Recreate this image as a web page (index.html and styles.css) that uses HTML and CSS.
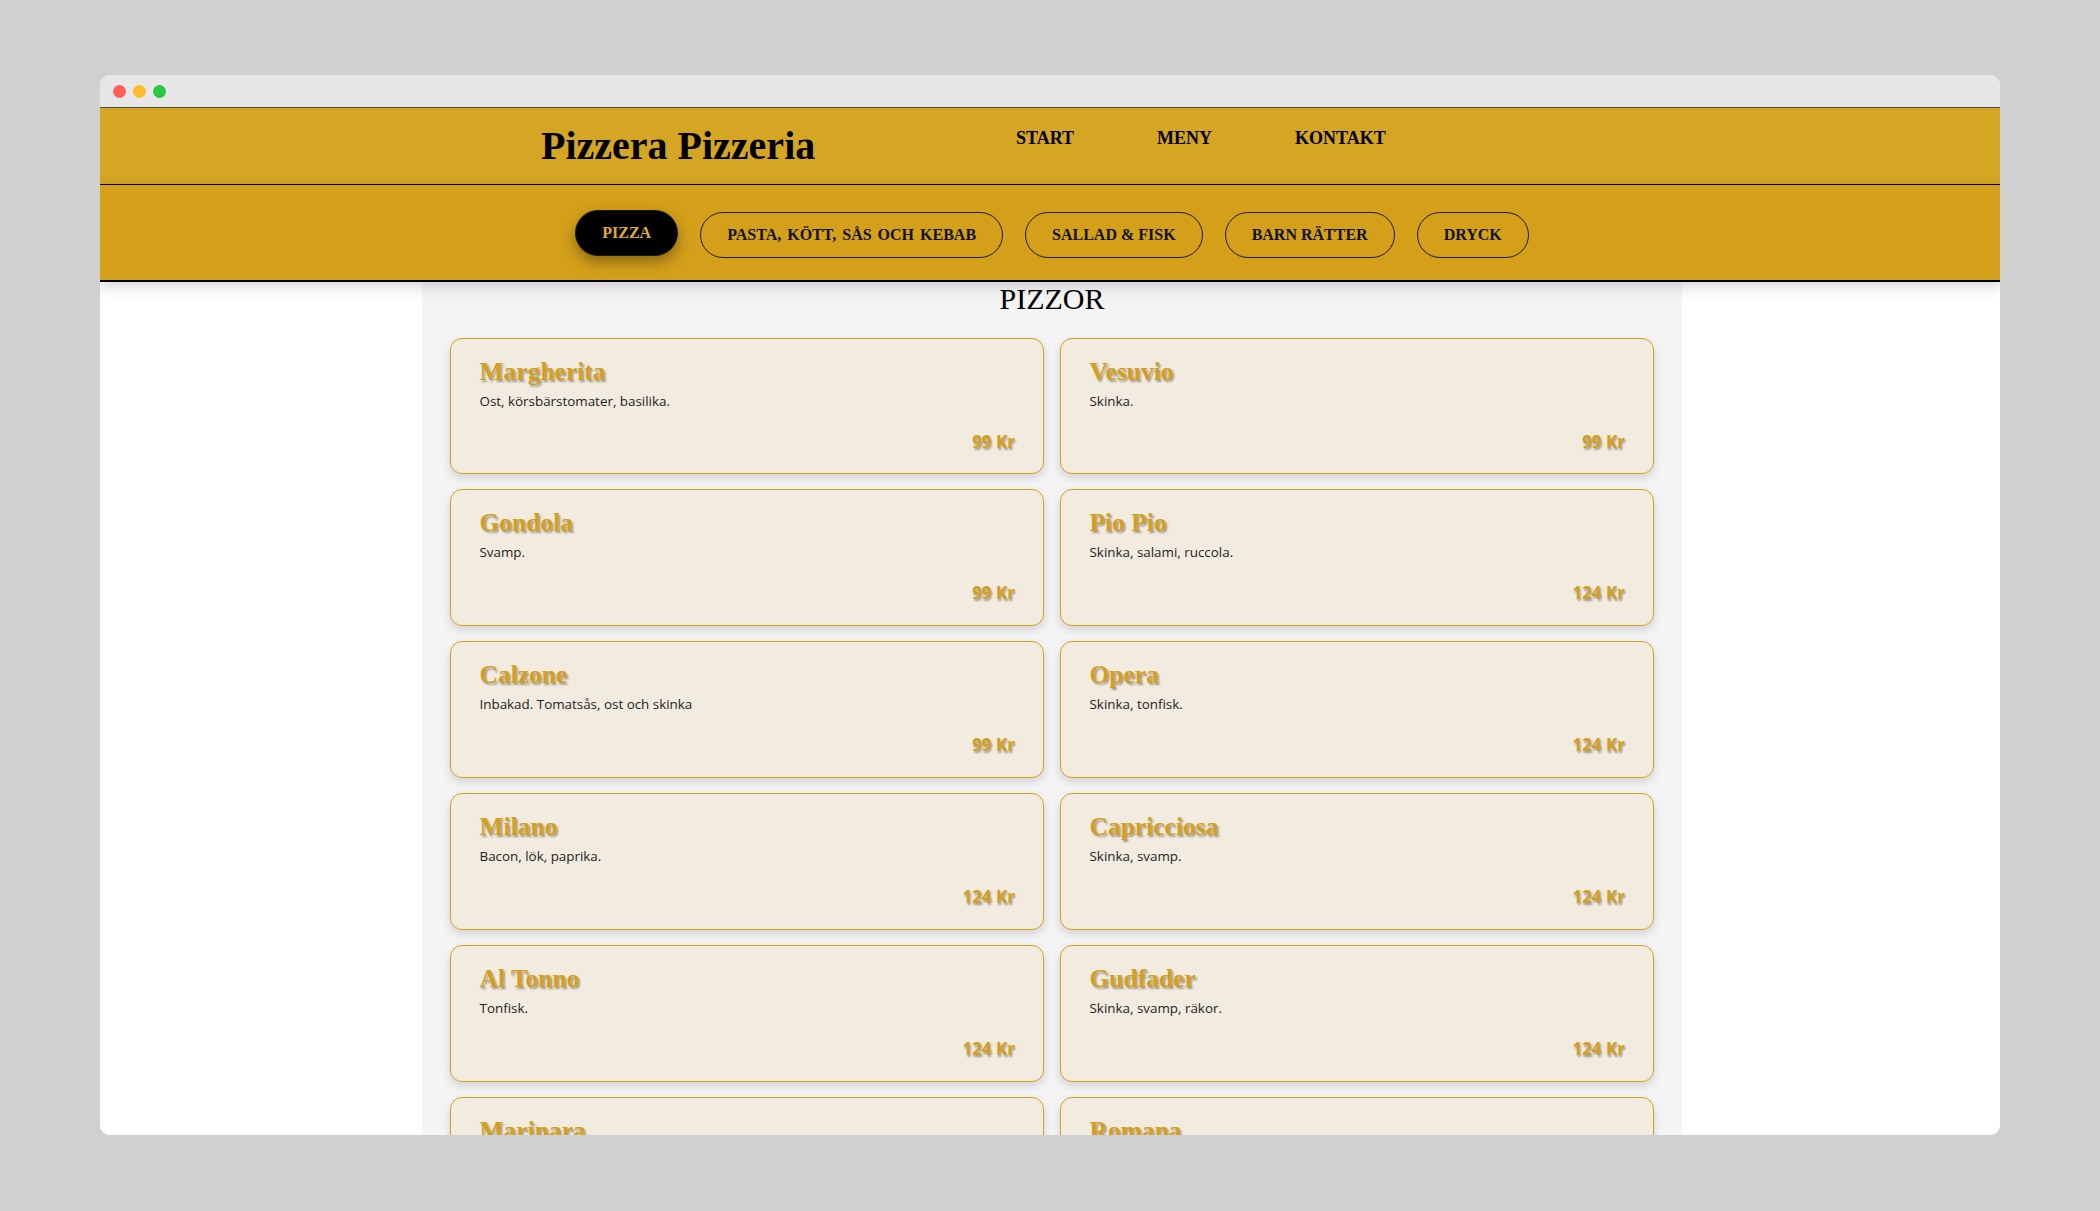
FILE: index.html
```html
<!DOCTYPE html>
<html lang="sv">
<head>
<meta charset="utf-8">
<title>Pizzera Pizzeria</title>
<link rel="stylesheet" href="styles.css">
</head>
<body>
<div class="window">
  <div class="titlebar">
    <span class="dot dot-red"></span>
    <span class="dot dot-yellow"></span>
    <span class="dot dot-green"></span>
  </div>
  <header class="site-header">
    <h1 class="brand">Pizzera Pizzeria</h1>
    <nav class="main-nav">
      <a href="#">START</a>
      <a href="#">MENY</a>
      <a href="#">KONTAKT</a>
    </nav>
  </header>
  <nav class="category-nav">
    <a class="pill pill-active" href="#">PIZZA</a>
    <a class="pill pill-long" href="#">PASTA, KÖTT, SÅS OCH KEBAB</a>
    <a class="pill" href="#">SALLAD &amp; FISK</a>
    <a class="pill" href="#">BARN RÄTTER</a>
    <a class="pill" href="#">DRYCK</a>
  </nav>
  <main class="page">
    <section class="menu-column">
      <h2 class="section-title">PIZZOR</h2>
      <div class="menu-grid">
        <article class="card"><h3 class="card-name">Margherita</h3><p class="card-desc">Ost, körsbärstomater, basilika.</p><p class="card-price">99 Kr</p></article>
        <article class="card"><h3 class="card-name">Vesuvio</h3><p class="card-desc">Skinka.</p><p class="card-price">99 Kr</p></article>
        <article class="card"><h3 class="card-name">Gondola</h3><p class="card-desc">Svamp.</p><p class="card-price">99 Kr</p></article>
        <article class="card"><h3 class="card-name">Pio Pio</h3><p class="card-desc">Skinka, salami, ruccola.</p><p class="card-price">124 Kr</p></article>
        <article class="card"><h3 class="card-name">Calzone</h3><p class="card-desc">Inbakad. Tomatsås, ost och skinka</p><p class="card-price">99 Kr</p></article>
        <article class="card"><h3 class="card-name">Opera</h3><p class="card-desc">Skinka, tonfisk.</p><p class="card-price">124 Kr</p></article>
        <article class="card"><h3 class="card-name">Milano</h3><p class="card-desc">Bacon, lök, paprika.</p><p class="card-price">124 Kr</p></article>
        <article class="card"><h3 class="card-name">Capricciosa</h3><p class="card-desc">Skinka, svamp.</p><p class="card-price">124 Kr</p></article>
        <article class="card"><h3 class="card-name">Al Tonno</h3><p class="card-desc">Tonfisk.</p><p class="card-price">124 Kr</p></article>
        <article class="card"><h3 class="card-name">Gudfader</h3><p class="card-desc">Skinka, svamp, räkor.</p><p class="card-price">124 Kr</p></article>
        <article class="card"><h3 class="card-name">Marinara</h3><p class="card-desc">Räkor, musslor, vitlök.</p><p class="card-price">124 Kr</p></article>
        <article class="card"><h3 class="card-name">Romana</h3><p class="card-desc">Skinka, bacon, lök.</p><p class="card-price">124 Kr</p></article>
      </div>
    </section>
  </main>
</div>
</body>
</html>
```
FILE: styles.css
```css
html, body {
  margin: 0;
  padding: 0;
}
body {
  background: #d0d0d0;
  width: 2100px;
  height: 1211px;
  overflow: hidden;
  font-family: "Liberation Serif", "Times New Roman", serif;
}
.window {
  margin: 75px 0 0 100px;
  width: 1900px;
  height: 1060px;
  background: #ffffff;
  border-radius: 10px;
  overflow: hidden;
  display: flex;
  flex-direction: column;
}
.titlebar {
  height: 32px;
  flex: 0 0 auto;
  background: #e7e7e7;
  border-bottom: 1px solid #4a4a4a;
  display: flex;
  align-items: center;
  gap: 7px;
  padding-left: 13px;
}
.dot {
  width: 13px;
  height: 13px;
  border-radius: 50%;
  display: block;
}
.dot-red { background: #ff5f57; }
.dot-yellow { background: #febc2e; }
.dot-green { background: #28c840; }

.site-header {
  flex: 0 0 auto;
  height: 76px;
  background: #d5a524;
  border-bottom: 1px solid #000;
  display: grid;
  grid-template-columns: 441px 475px auto;
  align-items: center;
}
.brand {
  grid-column: 2;
  margin: 0;
  font-size: 40px;
  line-height: 46px;
  font-weight: bold;
  color: #000;
}
.main-nav {
  grid-column: 3;
  align-self: start;
  margin-top: 20px;
  display: flex;
  gap: 83px;
}
.main-nav a {
  color: #000;
  text-decoration: none;
  font-weight: bold;
  font-size: 18px;
}

.category-nav {
  flex: 0 0 auto;
  position: relative;
  z-index: 2;
  background: #d4a01a;
  border-bottom: 2px solid #000;
  box-shadow: 0 4px 14px rgba(0, 0, 0, 0.18);
  display: flex;
  justify-content: center;
  gap: 22px;
  padding: 27px 0 22px 4px;
}
.pill {
  display: block;
  border: 1px solid #1a1a1a;
  border-radius: 999px;
  padding: 12.8px 26px;
  font-size: 16px;
  font-weight: bold;
  color: #111;
  text-decoration: none;
  line-height: 18.4px;
}
.pill-long {
  word-spacing: 2px;
}
.pill-active {
  background: #000;
  color: #e0ad2a;
  transform: translateY(-2px);
  box-shadow: 0 6px 14px rgba(0, 0, 0, 0.35);
}

.page {
  flex: 1 1 auto;
  display: flex;
  justify-content: center;
  padding-left: 4px;
  background: #fff;
}
.menu-column {
  width: 1260px;
  background: #f4f4f4;
  padding: 0 28px;
  box-sizing: border-box;
}
.section-title {
  margin: 0 0 21px;
  text-align: center;
  font-size: 30px;
  font-weight: normal;
  color: #000;
  line-height: 34.5px;
}
.menu-grid {
  display: grid;
  grid-template-columns: 1fr 1fr;
  gap: 15.7px 16px;
}
.card {
  background: #f2ebdf;
  border: 1px solid #d6a21c;
  border-radius: 12px;
  box-shadow: 0 4px 10px rgba(0, 0, 0, 0.14);
  padding: 18px 28px 20.3px 28.5px;
  display: flex;
  flex-direction: column;
}
.card-name {
  margin: 0;
  font-size: 25.5px;
  line-height: 29px;
  font-weight: bold;
  color: #d4a01c;
  text-shadow: 1.5px 1.5px 2px rgba(0, 0, 0, 0.35);
}
.card-desc {
  margin: 6px 0 0;
  font-family: "Open Sans", "Noto Sans", sans-serif;
  font-size: 13.4px;
  line-height: 19px;
  color: #1e1e1e;
}
.card-price {
  margin: 19px 0 0;
  text-align: right;
  font-family: "Open Sans", "Noto Sans", sans-serif;
  font-weight: bold;
  font-size: 17px;
  line-height: 23px;
  color: #d4a01c;
  text-shadow: 1px 1.5px 2px rgba(0, 0, 0, 0.35);
}
```
